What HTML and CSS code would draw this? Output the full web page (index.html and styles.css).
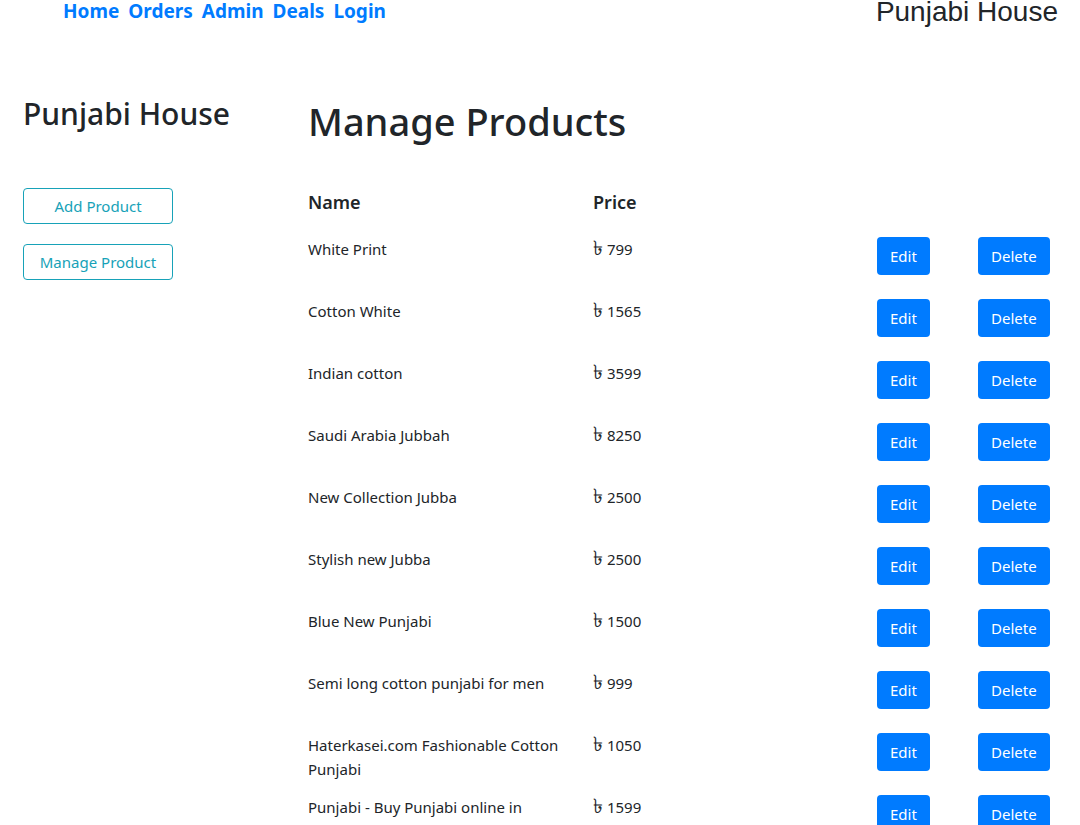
FILE: index.html
```html
<!DOCTYPE html>
<html>
<head>
<meta charset="utf-8">
<link rel="stylesheet" href="styles.css">
</head>
<body>
<header class="topbar">
  <nav class="links">
    <a href="#">Home</a>
    <a href="#">Orders</a>
    <a href="#">Admin</a>
    <a href="#">Deals</a>
    <a href="#">Login</a>
  </nav>
  <div class="brand">Punjabi House</div>
</header>
<div class="layout">
  <aside class="sidebar">
    <h2 class="side-title">Punjabi House</h2>
    <button class="btn-outline">Add Product</button>
    <button class="btn-outline">Manage Product</button>
  </aside>
  <main class="content">
    <h1 class="page-title">Manage Products</h1>
    <div class="table">
      <div class="th">Name</div><div class="th">Price</div><div class="th"></div><div class="th"></div>

      <div class="td">White Print</div><div class="td"><span class="taka">৳</span> 799</div><div class="td"><button class="btn">Edit</button></div><div class="td"><button class="btn">Delete</button></div>
      <div class="td">Cotton White</div><div class="td"><span class="taka">৳</span> 1565</div><div class="td"><button class="btn">Edit</button></div><div class="td"><button class="btn">Delete</button></div>
      <div class="td">Indian cotton</div><div class="td"><span class="taka">৳</span> 3599</div><div class="td"><button class="btn">Edit</button></div><div class="td"><button class="btn">Delete</button></div>
      <div class="td">Saudi Arabia Jubbah</div><div class="td"><span class="taka">৳</span> 8250</div><div class="td"><button class="btn">Edit</button></div><div class="td"><button class="btn">Delete</button></div>
      <div class="td">New Collection Jubba</div><div class="td"><span class="taka">৳</span> 2500</div><div class="td"><button class="btn">Edit</button></div><div class="td"><button class="btn">Delete</button></div>
      <div class="td">Stylish new Jubba</div><div class="td"><span class="taka">৳</span> 2500</div><div class="td"><button class="btn">Edit</button></div><div class="td"><button class="btn">Delete</button></div>
      <div class="td">Blue New Punjabi</div><div class="td"><span class="taka">৳</span> 1500</div><div class="td"><button class="btn">Edit</button></div><div class="td"><button class="btn">Delete</button></div>
      <div class="td">Semi long cotton punjabi for men</div><div class="td"><span class="taka">৳</span> 999</div><div class="td"><button class="btn">Edit</button></div><div class="td"><button class="btn">Delete</button></div>
      <div class="td">Haterkasei.com Fashionable Cotton Punjabi</div><div class="td"><span class="taka">৳</span> 1050</div><div class="td"><button class="btn">Edit</button></div><div class="td"><button class="btn">Delete</button></div>
      <div class="td">Punjabi - Buy Punjabi online in Bangladesh</div><div class="td"><span class="taka">৳</span> 1599</div><div class="td"><button class="btn">Edit</button></div><div class="td"><button class="btn">Delete</button></div>
    </div>
  </main>
</div>
</body>
</html>
```

FILE: styles.css
```css
html, body {
  margin: 0;
  padding: 0;
  background: #fff;
}
body {
  font-family: "Noto Sans", "Open Sans", sans-serif;
  color: #212529;
  font-size: 16px;
  overflow: hidden;
  height: 825px;
}
.topbar {
  display: flex;
  justify-content: space-between;
  align-items: flex-start;
  height: 62px;
  padding: 0 22px 0 63px;
}
.links {
  display: flex;
  gap: 9px;
  line-height: 22px;
}
.links a {
  color: #007bff;
  font-weight: 700;
  font-size: 19px;
  text-decoration: none;
}
.brand {
  font-family: "Liberation Sans", Arial, sans-serif;
  font-size: 28px;
  line-height: 30px;
  color: #212529;
  margin-top: -3px;
}
.layout {
  display: flex;
  padding-left: 23px;
}
.sidebar {
  width: 285px;
  display: flex;
  flex-direction: column;
  align-items: flex-start;
}
.side-title {
  font-size: 30px;
  font-weight: 500;
  margin: 34px 0 56px;
  line-height: 1.2;
}
.btn-outline {
  width: 150px;
  height: 36px;
  border: 1px solid #17a2b8;
  border-radius: 4px;
  background: #fff;
  color: #17a2b8;
  font-family: inherit;
  font-size: 15px;
  margin-bottom: 20px;
  padding: 0;
}
.content {
  flex: 1;
}
.page-title {
  font-size: 38px;
  font-weight: 500;
  margin: 37px 0 45px;
  line-height: 1.2;
}
.table {
  display: grid;
  grid-template-columns: 285px 284px 101px 100px;
}
.th {
  font-weight: 600;
  font-size: 18px;
  height: 47px;
}
.td {
  height: 62px;
  font-size: 15px;
  line-height: 24px;
}
.taka {
  font-size: 20px;
  line-height: 20px;
}
.btn {
  background: #007bff;
  color: #fff;
  border: 0;
  border-radius: 4px;
  height: 38px;
  padding: 0 13px;
  font-family: inherit;
  font-size: 15px;
  margin-top: 0;
}
```
